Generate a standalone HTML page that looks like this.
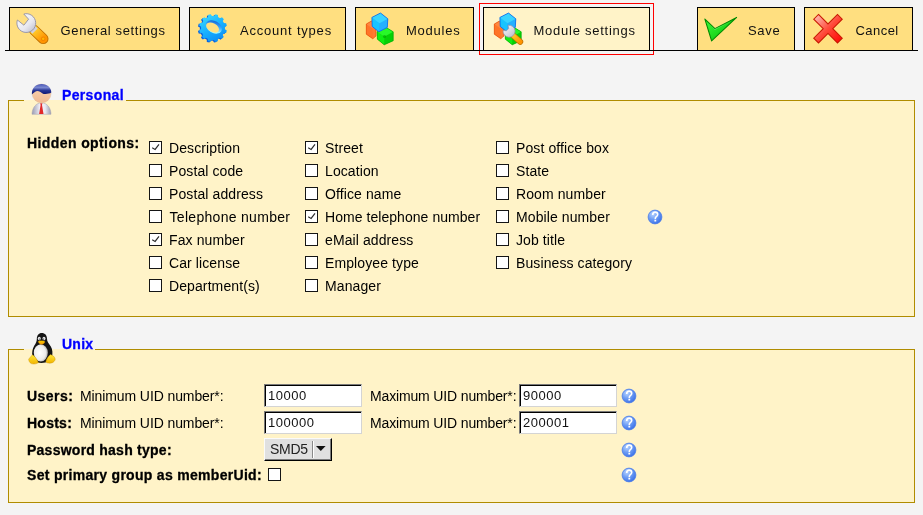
<!DOCTYPE html>
<html><head><meta charset="utf-8">
<style>
html,body{margin:0;padding:0;}
body{width:923px;height:515px;background:#f4f4f4;position:relative;overflow:hidden;font-family:"Liberation Sans",sans-serif;color:#000;}
.a{position:absolute;}
.t{position:absolute;white-space:nowrap;line-height:16px;font-size:14px;}
.b{font-weight:bold;letter-spacing:0.25px;-webkit-text-stroke:0.3px currentColor;}
.tab{position:absolute;top:7px;height:44px;box-sizing:border-box;border:1px solid #000;background:#ffdf80;}
.tab.sel{background:#fff3c8;}
.tt{position:absolute;top:23px;font-size:13px;line-height:16px;white-space:nowrap;color:#111;}
.fs{position:absolute;left:8px;width:907px;box-sizing:border-box;border:1px solid #b08c00;background:#fff3c8;}
.gap{position:absolute;height:1px;background:#fff3c8;}
.cb{position:absolute;width:13px;height:13px;box-sizing:border-box;border:1px solid #151515;background:#fff;}
.ck{position:absolute;left:-1px;top:-1px;}
.lbl{position:absolute;white-space:nowrap;font-size:14px;line-height:16px;letter-spacing:0.1px;}
.help{position:absolute;width:15px;height:15px;}
.inp{position:absolute;width:98px;height:23px;box-sizing:border-box;background:#fff;border-style:solid;border-width:1px;border-color:#7a7a7a #d4d4d4 #d4d4d4 #7a7a7a;box-shadow:inset 1px 1px 0 #000;}
.inp span{position:absolute;left:3px;top:3px;letter-spacing:0.5px;font-size:13px;line-height:16px;color:#111;}
</style></head>
<body>
<div style="position:absolute;left:0;top:0;width:923px;height:515px;will-change:transform">

<!-- tabs -->
<div class="tab" style="left:9px;width:171px"></div>
<div class="tab" style="left:189px;width:157px"></div>
<div class="tab" style="left:355px;width:119px"></div>
<div class="a" style="left:479px;top:3px;width:175px;height:52px;box-sizing:border-box;border:1px solid #f00"></div>
<div class="tab sel" style="left:483px;width:167px"></div>
<div class="tab" style="left:697px;width:98px"></div>
<div class="tab" style="left:804px;width:109px"></div>

<!-- tab baseline -->
<div class="a" style="left:5px;top:50px;width:913px;height:1px;background:#000"></div>
<div class="tt" style="left:60.5px;letter-spacing:0.65px">General settings</div>
<div class="tt" style="left:240px;letter-spacing:0.79px">Account types</div>
<div class="tt" style="left:406px;letter-spacing:0.75px">Modules</div>
<div class="tt" style="left:533.5px;letter-spacing:0.75px">Module settings</div>
<div class="tt" style="left:748px;letter-spacing:0.7px">Save</div>
<div class="tt" style="left:855.5px;letter-spacing:0.45px">Cancel</div>


<!-- wrench icon -->
<svg class="a" style="left:12px;top:9px" width="40" height="40" viewBox="0 0 40 40">
<defs>
<linearGradient id="wh" x1="0" y1="0" x2="1" y2="1"><stop offset="0" stop-color="#ffffff"/><stop offset="0.6" stop-color="#e8e8f0"/><stop offset="1" stop-color="#b8b8c8"/></linearGradient>
<linearGradient id="wo" x1="0" y1="0" x2="1" y2="1"><stop offset="0" stop-color="#ffd030"/><stop offset="1" stop-color="#ff9400"/></linearGradient>
</defs>
<line x1="22" y1="21" x2="31.2" y2="29.8" stroke="#c07000" stroke-width="10.6" stroke-linecap="round"/>
<line x1="22" y1="21" x2="31.2" y2="29.8" stroke="url(#wo)" stroke-width="8.8" stroke-linecap="round"/>
<circle cx="31.2" cy="29.8" r="1.8" fill="#ffb400" stroke="#f08000" stroke-width="0.9"/>
<path d="M18.2,22.6 L23.4,17.6 L25.6,19.6 L20.4,24.8 Z" fill="#d0d0dc"/>
<path d="M11.8,5.0 L16.6,10.2 L11.9,16.2 L5.4,11.0 A9.4,9.4 0 1 0 11.8,5.0 Z" fill="url(#wh)" stroke="#9090a8" stroke-width="0.9"/>
</svg>
<!-- gear icon -->
<svg class="a" style="left:197px;top:12px" width="32" height="32" viewBox="0 0 32 32">
<defs>
<linearGradient id="gb" x1="0.2" y1="0" x2="0.8" y2="1"><stop offset="0" stop-color="#3ad8ff"/><stop offset="0.5" stop-color="#18b0ff"/><stop offset="1" stop-color="#0a8af4"/></linearGradient>
<linearGradient id="gh" x1="0" y1="0" x2="0.4" y2="1"><stop offset="0" stop-color="#0a50c8"/><stop offset="0.55" stop-color="#3aa8ff"/><stop offset="1" stop-color="#a8ffff"/></linearGradient>
</defs>
<g transform="translate(16,16)">
<path fill="#0a62e0" transform="translate(-1.2,0.8)" d="M11.94,1.20 L13.79,2.41 L13.09,4.96 L10.88,5.06 L9.74,7.01 L10.74,8.99 L8.86,10.84 L6.89,9.82 L4.93,10.94 L4.80,13.15 L2.26,13.82 L1.06,11.95 L-1.20,11.94 L-2.41,13.79 L-4.96,13.09 L-5.06,10.88 L-7.01,9.74 L-8.99,10.74 L-10.84,8.86 L-9.82,6.89 L-10.94,4.93 L-13.15,4.80 L-13.82,2.26 L-11.95,1.06 L-11.94,-1.20 L-13.79,-2.41 L-13.09,-4.96 L-10.88,-5.06 L-9.74,-7.01 L-10.74,-8.99 L-8.86,-10.84 L-6.89,-9.82 L-4.93,-10.94 L-4.80,-13.15 L-2.26,-13.82 L-1.06,-11.95 L1.20,-11.94 L2.41,-13.79 L4.96,-13.09 L5.06,-10.88 L7.01,-9.74 L8.99,-10.74 L10.84,-8.86 L9.82,-6.89 L10.94,-4.93 L13.15,-4.80 L13.82,-2.26 L11.95,-1.06 Z"/>
<path fill="url(#gb)" d="M11.94,1.20 L13.79,2.41 L13.09,4.96 L10.88,5.06 L9.74,7.01 L10.74,8.99 L8.86,10.84 L6.89,9.82 L4.93,10.94 L4.80,13.15 L2.26,13.82 L1.06,11.95 L-1.20,11.94 L-2.41,13.79 L-4.96,13.09 L-5.06,10.88 L-7.01,9.74 L-8.99,10.74 L-10.84,8.86 L-9.82,6.89 L-10.94,4.93 L-13.15,4.80 L-13.82,2.26 L-11.95,1.06 L-11.94,-1.20 L-13.79,-2.41 L-13.09,-4.96 L-10.88,-5.06 L-9.74,-7.01 L-10.74,-8.99 L-8.86,-10.84 L-6.89,-9.82 L-4.93,-10.94 L-4.80,-13.15 L-2.26,-13.82 L-1.06,-11.95 L1.20,-11.94 L2.41,-13.79 L4.96,-13.09 L5.06,-10.88 L7.01,-9.74 L8.99,-10.74 L10.84,-8.86 L9.82,-6.89 L10.94,-4.93 L13.15,-4.80 L13.82,-2.26 L11.95,-1.06 Z"/>
<ellipse cx="0.2" cy="-1.4" rx="8.6" ry="6" transform="rotate(30)" fill="url(#gh)"/>
<ellipse cx="-0.6" cy="-0.2" rx="7.0" ry="4.3" transform="rotate(30)" fill="#ffdf80"/>
</g>
</svg>
<!-- cubes --><svg class="a" style="left:363px;top:11px" width="34" height="36" viewBox="0 0 34 36"><polygon points="3.3,13.0 8.5,10.0 13.0,12.0 13.0,25.0 9.8,27.8 3.3,23.2" fill="#ff7a30"/>
<polygon points="3.3,13.0 9.5,17.5 9.8,27.8 3.3,23.2" fill="#ff7428"/>
<polygon points="3.3,13.0 8.5,10.0 13.0,12.0 9.5,17.5" fill="#ff8840"/>
<polygon points="3.3,13.0 8.5,10.0 13.0,12.0 13.0,25.0 9.8,27.8 3.3,23.2" fill="none" stroke="#e04400" stroke-width="0.6"/>
<polygon points="23.3,16.6 30.2,20.8 30.2,29.8 21.2,33.8 14.4,28.2 14.1,20.8" fill="#10e010"/>
<polygon points="14.1,20.8 21.5,25.5 21.2,33.8 14.4,28.2" fill="#10ec10"/>
<polygon points="21.5,25.5 30.2,20.8 30.2,29.8 21.2,33.8" fill="#06d006"/>
<polygon points="23.3,16.6 30.2,20.8 21.5,25.5 14.1,20.8" fill="#28f828"/>
<circle cx="21.5" cy="25.5" r="1.6" fill="#009800" opacity="0.55"/>
<polygon points="23.3,16.6 30.2,20.8 30.2,29.8 21.2,33.8 14.4,28.2 14.1,20.8" fill="none" stroke="#00a400" stroke-width="0.6"/>
<polygon points="17.5,2.0 24.8,7.8 24.3,16.4 15.8,20.8 9.2,15.4 8.9,6.4" fill="#20b8ff"/>
<polygon points="8.9,6.4 16.5,12.2 15.8,20.8 9.2,15.4" fill="#18c4ff"/>
<polygon points="16.5,12.2 24.8,7.8 24.3,16.4 15.8,20.8" fill="#24b0ff"/>
<polygon points="17.5,2.0 24.8,7.8 16.5,12.2 8.9,6.4" fill="#38d4ff"/>
<polygon points="17.5,2.0 24.8,7.8 24.3,16.4 15.8,20.8 9.2,15.4 8.9,6.4" fill="none" stroke="#0a62e8" stroke-width="0.75"/>
</svg>
<!-- cubes wrench --><svg class="a" style="left:491px;top:11px" width="34" height="36" viewBox="0 0 34 36"><polygon points="3.3,13.0 8.5,10.0 13.0,12.0 13.0,25.0 9.8,27.8 3.3,23.2" fill="#ff7a30"/>
<polygon points="3.3,13.0 9.5,17.5 9.8,27.8 3.3,23.2" fill="#ff7428"/>
<polygon points="3.3,13.0 8.5,10.0 13.0,12.0 9.5,17.5" fill="#ff8840"/>
<polygon points="3.3,13.0 8.5,10.0 13.0,12.0 13.0,25.0 9.8,27.8 3.3,23.2" fill="none" stroke="#e04400" stroke-width="0.6"/>
<polygon points="23.3,16.6 30.2,20.8 30.2,29.8 21.2,33.8 14.4,28.2 14.1,20.8" fill="#10e010"/>
<polygon points="14.1,20.8 21.5,25.5 21.2,33.8 14.4,28.2" fill="#10ec10"/>
<polygon points="21.5,25.5 30.2,20.8 30.2,29.8 21.2,33.8" fill="#06d006"/>
<polygon points="23.3,16.6 30.2,20.8 21.5,25.5 14.1,20.8" fill="#28f828"/>
<circle cx="21.5" cy="25.5" r="1.6" fill="#009800" opacity="0.55"/>
<polygon points="23.3,16.6 30.2,20.8 30.2,29.8 21.2,33.8 14.4,28.2 14.1,20.8" fill="none" stroke="#00a400" stroke-width="0.6"/>
<polygon points="17.5,2.0 24.8,7.8 24.3,16.4 15.8,20.8 9.2,15.4 8.9,6.4" fill="#20b8ff"/>
<polygon points="8.9,6.4 16.5,12.2 15.8,20.8 9.2,15.4" fill="#18c4ff"/>
<polygon points="16.5,12.2 24.8,7.8 24.3,16.4 15.8,20.8" fill="#24b0ff"/>
<polygon points="17.5,2.0 24.8,7.8 16.5,12.2 8.9,6.4" fill="#38d4ff"/>
<polygon points="17.5,2.0 24.8,7.8 24.3,16.4 15.8,20.8 9.2,15.4 8.9,6.4" fill="none" stroke="#0a62e8" stroke-width="0.75"/>
<defs>
<linearGradient id="mw" x1="0" y1="0" x2="1" y2="1"><stop offset="0" stop-color="#ffffff"/><stop offset="1" stop-color="#b8b8c8"/></linearGradient>
<linearGradient id="mo" x1="0" y1="0" x2="1" y2="1"><stop offset="0" stop-color="#ffd030"/><stop offset="1" stop-color="#ff9400"/></linearGradient>
</defs>
<line x1="20.5" y1="23" x2="29.2" y2="30.8" stroke="#c07000" stroke-width="6" stroke-linecap="round"/>
<line x1="20.5" y1="23" x2="29.2" y2="30.8" stroke="url(#mo)" stroke-width="4.6" stroke-linecap="round"/>
<path d="M12.1,19.4 L15.4,19.8 L17.6,17.6 L17.1,14.3 A6,6 0 1 1 12.1,19.4 Z" fill="url(#mw)" stroke="#9090a8" stroke-width="0.7"/>
</svg>
<!-- check --><svg class="a" style="left:700px;top:12px" width="40" height="32" viewBox="0 0 40 32">
<defs><linearGradient id="ckg" x1="0" y1="0" x2="1" y2="1"><stop offset="0" stop-color="#40ff40"/><stop offset="1" stop-color="#00b800"/></linearGradient></defs>
<polygon points="4.9,7.1 14.9,16.7 36.6,5.4 11.6,28.8" fill="url(#ckg)" stroke="#008a00" stroke-width="1.1" stroke-linejoin="round"/>
<polygon points="7,9.5 14.8,18 32,8.8 14.5,17" fill="#9cff9c" opacity="0.5"/>
</svg>
<!-- x --><svg class="a" style="left:811px;top:12px" width="34" height="34" viewBox="0 0 34 34">
<defs><linearGradient id="xg" x1="0" y1="0" x2="1" y2="1"><stop offset="0" stop-color="#ffc8c0"/><stop offset="0.5" stop-color="#ff4a3a"/><stop offset="1" stop-color="#ff0000"/></linearGradient></defs>
<path d="M7,2.5 L17,12.5 L27,2.5 L32,7.5 L22,17.5 L32,27.5 L27,32.5 L17,22.5 L7,32.5 L2,27.5 L12,17.5 L2,7.5 Z" transform="translate(17,16.7) scale(0.95) translate(-17,-17.5)" fill="url(#xg)" stroke="#c81800" stroke-width="1.1" stroke-linejoin="miter"/>
</svg>

<svg width="0" height="0" style="position:absolute"><defs>
<radialGradient id="hg" cx="0.35" cy="0.3" r="0.75"><stop offset="0" stop-color="#b8d4ff"/><stop offset="0.5" stop-color="#6c9cf4"/><stop offset="1" stop-color="#3a70e8"/></radialGradient>
<g id="helpi"><circle cx="8" cy="8" r="6.9" fill="url(#hg)" stroke="#4a7ce8" stroke-width="0.8"/>
<path d="M5.7,5.9 C5.7,4.2 6.7,3.1 8.2,3.1 C9.8,3.1 10.7,4.2 10.7,5.5 C10.7,7 9.3,7.4 8.7,8.2 C8.4,8.7 8.3,9.2 8.3,9.9" fill="none" stroke="#fff" stroke-width="1.6"/>
<rect x="7.4" y="10.7" width="1.8" height="1.8" fill="#fff"/></g>
</defs></svg>
<!-- Personal fieldset -->
<div class="fs" style="top:100px;height:217px"></div>
<div class="gap" style="left:24px;top:100px;width:102px"></div>
<div class="t b" style="left:62px;top:87px;color:#0000ff;letter-spacing:0.35px">Personal</div>
<!-- person --><svg class="a" style="left:26px;top:80px" width="32" height="38" viewBox="0 0 32 38">
<defs>
<linearGradient id="pf" x1="0" y1="0" x2="0" y2="1"><stop offset="0" stop-color="#fad6b4"/><stop offset="1" stop-color="#f2ba92"/></linearGradient>
<linearGradient id="ph" x1="0" y1="0" x2="0" y2="1"><stop offset="0" stop-color="#4a58b8"/><stop offset="0.35" stop-color="#7a88d0"/><stop offset="0.6" stop-color="#2a3898"/><stop offset="1" stop-color="#0c1470"/></linearGradient>
<linearGradient id="pb" x1="0" y1="0" x2="1" y2="0"><stop offset="0" stop-color="#9a9ab2"/><stop offset="0.45" stop-color="#f6f6fc"/><stop offset="0.7" stop-color="#e8e8f0"/><stop offset="1" stop-color="#9a9ab2"/></linearGradient>
</defs>
<path d="M6,34.3 C6.2,27.5 10,22.9 15.5,22.9 C21,22.9 24.8,27.5 25,34.3 Z" fill="url(#pb)" stroke="#a0a0b0" stroke-width="0.5"/>
<path d="M14.2,23.2 L16.4,23.2 L16,25 L17.5,33.9 L13.1,33.9 L14.6,25 Z" fill="#e22a2a"/>
<circle cx="15.6" cy="13.5" r="9.4" fill="url(#pf)" stroke="#dcb894" stroke-width="0.4"/>
<path d="M5.9,14.4 C5.6,7.8 10,4 15.6,4 C21.4,4 25.4,7.6 25.3,12.6 C23.4,13.9 20.6,14.1 17.6,13.9 C15.6,13.7 14.2,11 11.8,11 C9.4,11 7.6,13.2 5.9,14.4 Z" fill="url(#ph)"/>
</svg>


<div class="t b" style="left:27px;top:135px;letter-spacing:0.4px">Hidden options:</div>
<svg class="a" style="left:647px;top:209px" width="16" height="16" viewBox="0 0 16 16"><use href="#helpi"/></svg>

<div class="cb" style="left:149px;top:141px"><svg class="ck" width="13" height="13"><polyline points="3.2,6.8 6.1,8.4 10,3.4" fill="none" stroke="#2a2a2a" stroke-width="1.15"/></svg></div>
<div class="lbl" style="left:169px;top:140px">Description</div>
<div class="cb" style="left:149px;top:164px"></div>
<div class="lbl" style="left:169px;top:163px">Postal code</div>
<div class="cb" style="left:149px;top:187px"></div>
<div class="lbl" style="left:169px;top:186px">Postal address</div>
<div class="cb" style="left:149px;top:210px"></div>
<div class="lbl" style="left:169.5px;top:209px;letter-spacing:0.3px">Telephone number</div>
<div class="cb" style="left:149px;top:233px"><svg class="ck" width="13" height="13"><polyline points="3.2,6.8 6.1,8.4 10,3.4" fill="none" stroke="#2a2a2a" stroke-width="1.15"/></svg></div>
<div class="lbl" style="left:169px;top:232px">Fax number</div>
<div class="cb" style="left:149px;top:256px"></div>
<div class="lbl" style="left:169px;top:255px">Car license</div>
<div class="cb" style="left:149px;top:279px"></div>
<div class="lbl" style="left:169px;top:278px">Department(s)</div>
<div class="cb" style="left:305px;top:141px"><svg class="ck" width="13" height="13"><polyline points="3.2,6.8 6.1,8.4 10,3.4" fill="none" stroke="#2a2a2a" stroke-width="1.15"/></svg></div>
<div class="lbl" style="left:325px;top:140px">Street</div>
<div class="cb" style="left:305px;top:164px"></div>
<div class="lbl" style="left:325px;top:163px">Location</div>
<div class="cb" style="left:305px;top:187px"></div>
<div class="lbl" style="left:325px;top:186px">Office name</div>
<div class="cb" style="left:305px;top:210px"><svg class="ck" width="13" height="13"><polyline points="3.2,6.8 6.1,8.4 10,3.4" fill="none" stroke="#2a2a2a" stroke-width="1.15"/></svg></div>
<div class="lbl" style="left:325px;top:209px;letter-spacing:0.05px">Home telephone number</div>
<div class="cb" style="left:305px;top:233px"></div>
<div class="lbl" style="left:325px;top:232px">eMail address</div>
<div class="cb" style="left:305px;top:256px"></div>
<div class="lbl" style="left:325px;top:255px">Employee type</div>
<div class="cb" style="left:305px;top:279px"></div>
<div class="lbl" style="left:325px;top:278px">Manager</div>
<div class="cb" style="left:496px;top:141px"></div>
<div class="lbl" style="left:516px;top:140px">Post office box</div>
<div class="cb" style="left:496px;top:164px"></div>
<div class="lbl" style="left:516px;top:163px">State</div>
<div class="cb" style="left:496px;top:187px"></div>
<div class="lbl" style="left:516px;top:186px">Room number</div>
<div class="cb" style="left:496px;top:210px"></div>
<div class="lbl" style="left:516px;top:209px">Mobile number</div>
<div class="cb" style="left:496px;top:233px"></div>
<div class="lbl" style="left:516px;top:232px">Job title</div>
<div class="cb" style="left:496px;top:256px"></div>
<div class="lbl" style="left:516px;top:255px">Business category</div>

<!-- Unix fieldset -->
<div class="fs" style="top:349px;height:154px"></div>
<div class="gap" style="left:24px;top:349px;width:71px"></div>
<div class="t b" style="left:62px;top:336px;color:#0000ff">Unix</div>
<!-- tux --><svg class="a" style="left:26px;top:330px" width="32" height="38" viewBox="0 0 32 38">
<defs>
<radialGradient id="tb" cx="0.42" cy="0.5" r="0.6"><stop offset="0" stop-color="#ffffff"/><stop offset="0.7" stop-color="#ececec"/><stop offset="1" stop-color="#a8a8a8"/></radialGradient>
<linearGradient id="tf" x1="0" y1="0" x2="0" y2="1"><stop offset="0" stop-color="#ffe838"/><stop offset="1" stop-color="#f2b400"/></linearGradient>
<linearGradient id="tk" x1="0" y1="0" x2="0" y2="1"><stop offset="0" stop-color="#ffd800"/><stop offset="1" stop-color="#f08c00"/></linearGradient>
</defs>
<path d="M15.8,2.9 C12.6,2.9 10.8,5.4 10.8,9 C10.8,11.4 10,13 8.2,15.8 C6.4,18.8 5.8,22.6 6.4,26.6 C7.2,30.4 10.4,33 15.4,33 C21,33 24.8,30.6 26,26.8 C26.8,23.2 26.6,19.6 24.8,16.6 C22.6,13.2 21,11.6 21,8.8 C21,5.2 19,2.9 15.8,2.9 Z" fill="#141414"/>
<ellipse cx="14.8" cy="22.8" rx="7" ry="8.6" fill="url(#tb)"/>
<ellipse cx="13.3" cy="8.6" rx="1.5" ry="1.8" fill="#e4e4e4"/>
<ellipse cx="18" cy="8.6" rx="1.5" ry="1.8" fill="#e4e4e4"/>
<circle cx="13.7" cy="9.1" r="0.6" fill="#333"/><circle cx="17.6" cy="9.1" r="0.6" fill="#333"/>
<path d="M12,11.6 C13.4,10.5 17.6,10.4 19,11.8 C18.4,13.6 16.8,14.6 15.6,14.6 C14.4,14.6 12.8,13.6 12,11.6 Z" fill="url(#tk)" stroke="#c88000" stroke-width="0.3"/>
<path d="M2.6,29.2 L6.4,24.8 C8.6,25.8 11,29 12.4,32.6 C10.8,34 7.6,34.4 5.2,33.6 C3.6,32.6 2.8,31 2.6,29.2 Z" fill="url(#tf)" stroke="#c89000" stroke-width="0.4"/>
<path d="M29.2,29 C28.6,26.8 26.8,25.2 24.4,24.6 C22.4,26.2 20.2,29.4 19.8,32 C21.6,33.4 24.8,33.6 27,32.4 C28.4,31.4 29.2,30.2 29.2,29 Z" fill="url(#tf)" stroke="#c89000" stroke-width="0.4"/>
</svg>


<div class="t b" style="left:27px;top:388px;letter-spacing:0.45px">Users:</div>
<div class="t" style="left:80px;top:388px;letter-spacing:-0.1px">Minimum UID number*:</div>
<div class="inp" style="left:264px;top:384px"><span>10000</span></div>
<div class="t" style="left:370px;top:388px;letter-spacing:-0.15px">Maximum UID number*:</div>
<div class="inp" style="left:519px;top:384px"><span>90000</span></div>

<div class="t b" style="left:27px;top:415px;letter-spacing:0.25px">Hosts:</div>
<div class="t" style="left:80px;top:415px;letter-spacing:-0.1px">Minimum UID number*:</div>
<div class="inp" style="left:264px;top:411px"><span>100000</span></div>
<div class="t" style="left:370px;top:415px;letter-spacing:-0.15px">Maximum UID number*:</div>
<div class="inp" style="left:519px;top:411px"><span>200001</span></div>

<div class="t b" style="left:27px;top:442px">Password hash type:</div>
<div class="t b" style="left:27px;top:467px;letter-spacing:0.3px">Set primary group as memberUid:</div>

<svg class="a" style="left:621px;top:388px" width="16" height="16" viewBox="0 0 16 16"><use href="#helpi"/></svg>
<svg class="a" style="left:621px;top:415px" width="16" height="16" viewBox="0 0 16 16"><use href="#helpi"/></svg>
<svg class="a" style="left:621px;top:442px" width="16" height="16" viewBox="0 0 16 16"><use href="#helpi"/></svg>
<svg class="a" style="left:621px;top:467px" width="16" height="16" viewBox="0 0 16 16"><use href="#helpi"/></svg>
<div class="a" style="left:264px;top:438px;width:68px;height:23px;box-sizing:border-box;background:#e0e0e0;border-style:solid;border-width:1px;border-color:#fafafa #000 #000 #fafafa;box-shadow:inset -1px -1px 0 #7a7a7a"></div>
<div class="a" style="left:312px;top:441px;width:1px;height:17px;background:#8a8a8a"></div>
<div class="a" style="left:313px;top:441px;width:1px;height:17px;background:#fff"></div>
<svg class="a" style="left:316px;top:446px" width="10" height="6" viewBox="0 0 10 6"><polygon points="0,0 9.6,0 4.8,5" fill="#111"/></svg>
<div class="a" style="left:270px;top:441px;font-size:14px;line-height:16px;letter-spacing:-0.3px;color:#222">SMD5</div>
<div class="cb" style="left:268px;top:468px"></div>
</div>
</body></html>
